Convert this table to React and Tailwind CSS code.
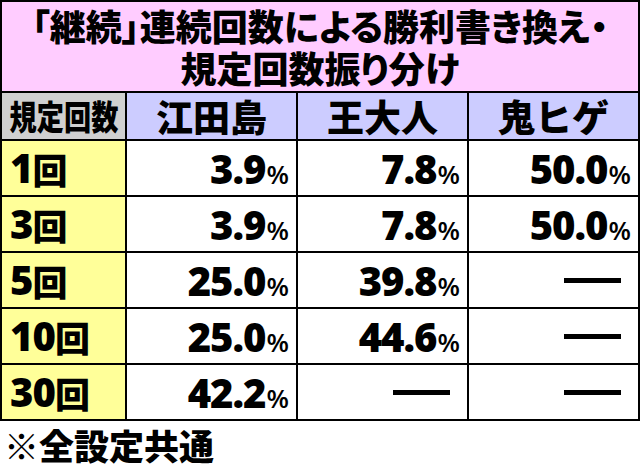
import React from "react";

const JP = { fontFamily: '"Noto Sans CJK JP", "Noto Sans", sans-serif' };
const NUM = { fontFamily: '"Open Sans", "Liberation Sans", sans-serif' };

const rows = [
  { n: "1", v: ["3.9", "7.8", "50.0"] },
  { n: "3", v: ["3.9", "7.8", "50.0"] },
  { n: "5", v: ["25.0", "39.8", null] },
  { n: "10", v: ["25.0", "44.6", null] },
  { n: "30", v: ["42.2", null, null] },
];

function Value({ v }) {
  if (!v) {
    return (
      <div className="bg-white flex items-center justify-end pr-[17px]">
        <div className="w-[57px] h-[5px] bg-black" />
      </div>
    );
  }
  return (
    <div className="bg-white flex items-center justify-end pr-[7px] pt-[2px] text-black" style={NUM}>
      <span className="text-[40px] font-extrabold leading-none tracking-[-1px]">{v}</span>
      <span className="text-[26px] font-semibold leading-none mt-[10px] ml-[1px]">%</span>
    </div>
  );
}

export default function App() {
  return (
    <div className="w-[640px] h-[470px] bg-white text-black overflow-hidden">
      <div className="grid grid-cols-[123px_169px_169px_169px] grid-rows-[89px_46px_54px_54px_54px_54px_54px] gap-[2px] bg-black border-2 border-black">
        {/* title */}
        <div className="col-span-4 bg-[#ffccff] flex flex-col items-center justify-center pb-[2px] whitespace-nowrap [font-feature-settings:'palt']" style={JP}>
          <div className="text-[36px] font-black leading-[42px]">「継続」連続回数による勝利書き換え・</div>
          <div className="text-[36px] font-black leading-[42px]">規定回数振り分け</div>
        </div>

        {/* header */}
        <div className="bg-[#d0d0d0] flex items-center justify-center overflow-hidden" style={JP}>
          <span className="inline-block text-[34px] font-black leading-none scale-x-[0.8] whitespace-nowrap">規定回数</span>
        </div>
        {["江田島", "王大人", "鬼ヒゲ"].map((h) => (
          <div key={h} className="bg-[#ccccff] flex items-center justify-center text-[37px] font-black leading-none" style={JP}>
            {h}
          </div>
        ))}

        {/* data */}
        {rows.map((r) => (
          <React.Fragment key={r.n}>
            <div className="bg-[#ffff99] flex items-center pl-[8px]">
              <span className="text-[40px] font-extrabold leading-none tracking-[-1px]" style={NUM}>{r.n}</span>
              <span className="text-[35px] font-black leading-none" style={JP}>回</span>
            </div>
            {r.v.map((v, i) => (
              <Value key={i} v={v} />
            ))}
          </React.Fragment>
        ))}
      </div>

      <div className="pl-[4px] pt-[2px] text-[35px] font-black leading-[44px]" style={JP}>
        ※全設定共通
      </div>
    </div>
  );
}
